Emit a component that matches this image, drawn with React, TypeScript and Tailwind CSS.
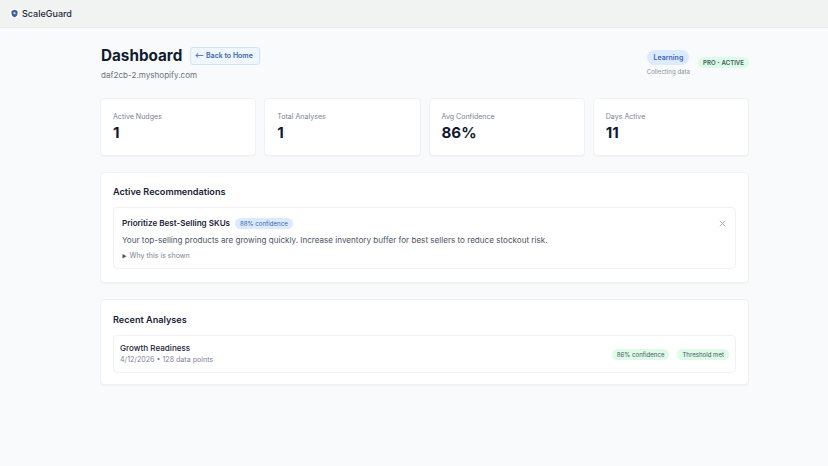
import React from 'react';

const stats = [
  { label: 'Active Nudges', value: '1' },
  { label: 'Total Analyses', value: '1' },
  { label: 'Avg Confidence', value: '86%' },
  { label: 'Days Active', value: '11' },
];

const App = () => {
  return (
    <div className="min-h-[466px] bg-[#f9fafc] font-['Inter',sans-serif] text-[#111827]">
      {/* top bar */}
      <div className="h-7 bg-[#f1f2f2] border-b border-[#eceded] flex items-center pl-[10px]">
        <div className="w-[9px] h-[9px] bg-white flex items-center justify-center mr-[2px]">
          <svg viewBox="0 0 24 24" className="w-[9px] h-[9px]">
            <path d="M12 2l8 3v6c0 5.500-3.500 9.500-8 11-4.500-1.500-8-5.500-8-11V5z" fill="#3f5f9e" />
            <circle cx="12" cy="11" r="3" fill="#c9d6ee" />
          </svg>
        </div>
        <span className="text-[9px] font-medium text-[#1f2937] ml-[1px]">ScaleGuard</span>
      </div>

      <div className="w-[649px] ml-[100px] pt-[18px]">
        {/* header */}
        <div className="flex justify-between items-start h-[52px]">
          <div>
            <div className="flex items-center gap-2">
              <h1 className="text-[15.25px] leading-[20px] font-bold text-[#111a2e] ml-[1px]">Dashboard</h1>
              <button className="h-[18px] w-[70px] pr-[3px] rounded-[3px] border border-[#cfe2fb] bg-[#eff6ff] text-[7px] font-semibold text-[#3b66ad] whitespace-nowrap">
                ⟵ Back to Home
              </button>
            </div>
            <p className="text-[8.1px] leading-[12px] text-[#6b7280] mt-[3px] ml-[1px]">daf2cb-2.myshopify.com</p>
          </div>
          <div className="flex items-center pt-[4px]">
            <div className="flex flex-col items-center">
              <span className="h-[15px] px-[6px] rounded-full bg-[#dbeafe] text-[7px] leading-[15px] font-semibold text-[#3b66ad]">Learning</span>
              <span className="text-[6.1px] leading-[9px] mt-[2px] text-[#8b93a0]">Collecting data</span>
            </div>
            <span className="h-[11px] px-[5px] ml-[8px] mb-[2px] rounded-full bg-[#dcfce7] text-[6.1px] leading-[11px] font-semibold text-[#4b5563]">PRO - ACTIVE</span>
          </div>
        </div>

        {/* stats */}
        <div className="grid grid-cols-4 gap-2 mb-[16px]">
          {stats.map((s) => (
            <div key={s.label} className="h-[58px] bg-white rounded-[4px] border border-[#f0f1f4] shadow-[0_1px_1px_rgba(0,0,0,0.03)] pl-3 pt-[13px]">
              <div className="text-[7.07px] leading-[10px] text-[#7b8391]">{s.label}</div>
              <div className="text-[15.1px] leading-[20px] font-bold text-[#111a2e] mt-[1px]">{s.value}</div>
            </div>
          ))}
        </div>

        {/* recommendations */}
        <div className="h-[111px] bg-white rounded-[4px] border border-[#f0f1f4] shadow-[0_1px_1px_rgba(0,0,0,0.03)] px-3 pt-[12px] mb-[16px]">
          <h2 className="text-[9.15px] leading-[13px] font-semibold text-[#1a2338]">Active Recommendations</h2>
          <div className="h-[62px] mt-[9px] rounded-[4px] border border-[#f0f1f4] pl-2 pr-[9px] pt-[9px]">
            <div className="flex items-center">
              <span className="text-[8.1px] leading-[12px] font-semibold text-[#1a2338]">Prioritize Best-Selling SKUs</span>
              <span className="h-[11px] px-[5px] ml-[5px] rounded-full bg-[#dbeafe] text-[6.1px] leading-[11px] text-[#3b66ad]">88% confidence</span>
              <svg viewBox="0 0 10 10" className="w-[7px] h-[7px] ml-auto stroke-[#8b93a0]" fill="none" strokeWidth="1">
                <path d="M1 1l8 8M9 1l-8 8" />
              </svg>
            </div>
            <p className="text-[8.1px] leading-[12px] text-[#4b5563] mt-[5px]">Your top-selling products are growing quickly. Increase inventory buffer for best sellers to reduce stockout risk.</p>
            <div className="flex items-center text-[7.05px] leading-[10px] text-[#7b8391] mt-[5px]">
              <span className="text-[5px] mr-[3px] text-[#4b5563]">▶</span>Why this is shown
            </div>
          </div>
        </div>

        {/* recent analyses */}
        <div className="h-[86px] bg-white rounded-[4px] border border-[#f0f1f4] shadow-[0_1px_1px_rgba(0,0,0,0.03)] px-3 pt-[13px]">
          <h2 className="text-[9.15px] leading-[13px] font-semibold text-[#1a2338]">Recent Analyses</h2>
          <div className="h-[38px] mt-[9px] rounded-[4px] border border-[#f0f1f4] px-[6px] flex items-center justify-between">
            <div>
              <div className="text-[8.1px] leading-[11px] font-medium text-[#1a2338]">Growth Readiness</div>
              <div className="text-[7.1px] leading-[11px] text-[#7b8391]">4/12/2026 • 128 data points</div>
            </div>
            <div className="flex items-center gap-2">
              <span className="h-[11px] px-[5px] rounded-full bg-[#dcfce7] text-[6.1px] leading-[11px] text-[#4b5563]">86% confidence</span>
              <span className="h-[11px] px-[5px] rounded-full bg-[#dcfce7] text-[6.1px] leading-[11px] text-[#4b5563]">Threshold met</span>
            </div>
          </div>
        </div>
      </div>
    </div>
  );
};

export default App;
